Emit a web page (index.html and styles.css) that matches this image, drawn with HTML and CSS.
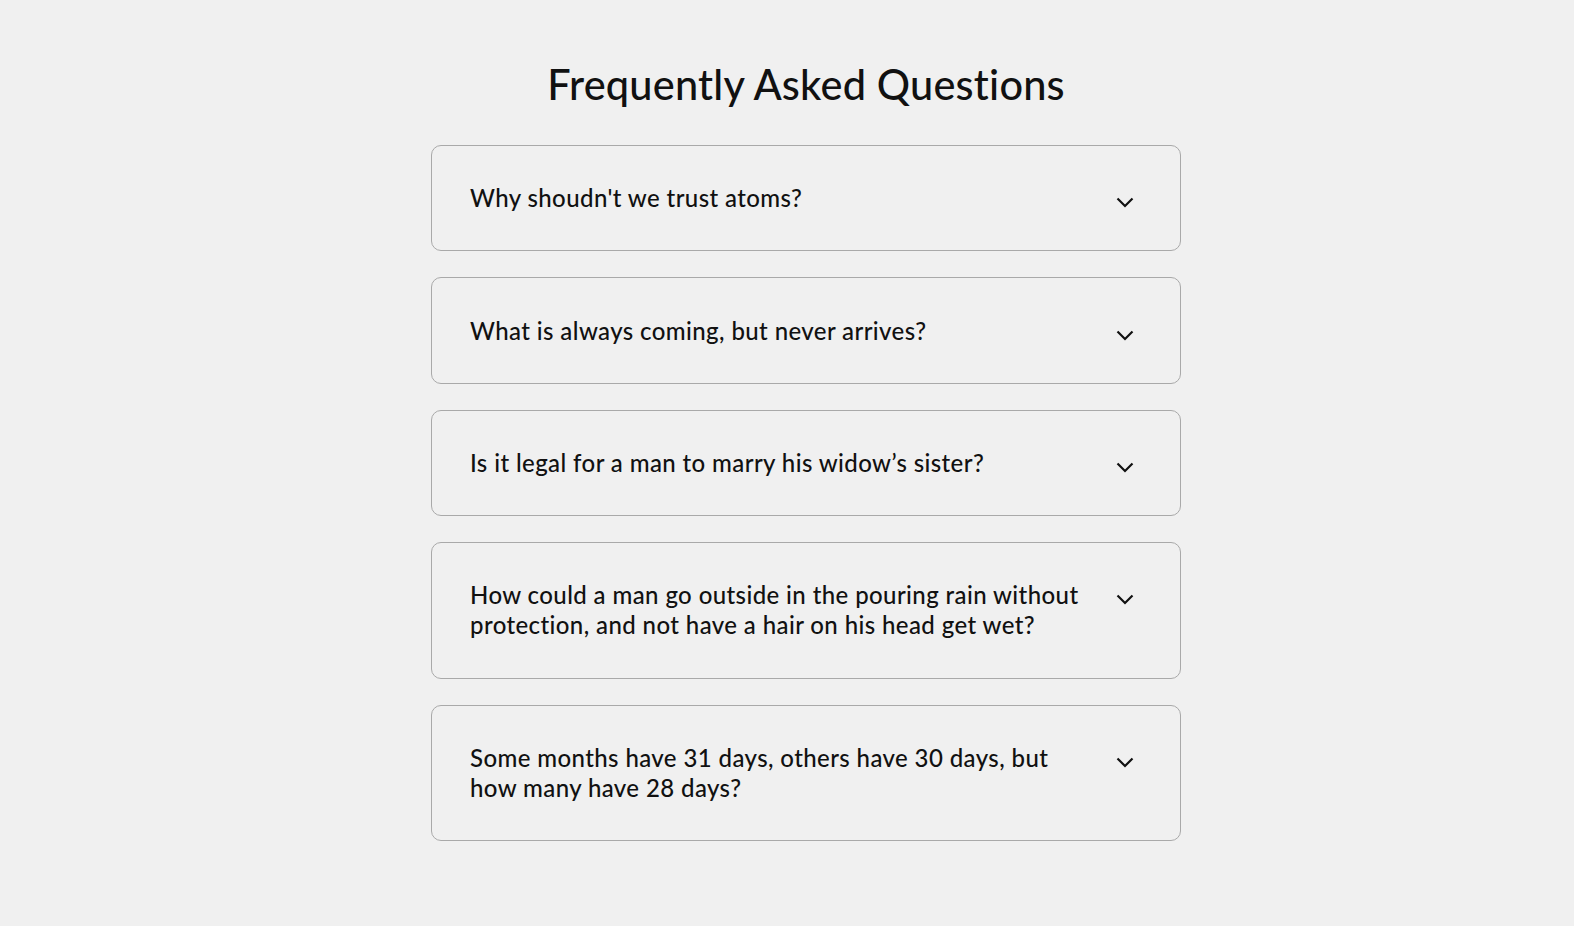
FILE: index.html
```html
<!DOCTYPE html>
<html lang="en">
<head>
<meta charset="utf-8">
<title>FAQ</title>
<link rel="stylesheet" href="styles.css">
</head>
<body>
<main class="page">
  <h1 class="title">Frequently Asked Questions</h1>
  <section class="faq">
    <div class="item">
      <p class="question">Why shoudn't we trust atoms?</p>
      <svg class="chev" viewBox="0 0 18 11" width="18" height="11"><path d="M1.5 1.5 L9 9 L16.5 1.5" fill="none" stroke="#111" stroke-width="2.2"/></svg>
    </div>
    <div class="item">
      <p class="question">What is always coming, but never arrives?</p>
      <svg class="chev" viewBox="0 0 18 11" width="18" height="11"><path d="M1.5 1.5 L9 9 L16.5 1.5" fill="none" stroke="#111" stroke-width="2.2"/></svg>
    </div>
    <div class="item">
      <p class="question">Is it legal for a man to marry his widow’s sister?</p>
      <svg class="chev" viewBox="0 0 18 11" width="18" height="11"><path d="M1.5 1.5 L9 9 L16.5 1.5" fill="none" stroke="#111" stroke-width="2.2"/></svg>
    </div>
    <div class="item">
      <p class="question">How could a man go outside in the pouring rain without protection, and not have a hair on his head get wet?</p>
      <svg class="chev" viewBox="0 0 18 11" width="18" height="11"><path d="M1.5 1.5 L9 9 L16.5 1.5" fill="none" stroke="#111" stroke-width="2.2"/></svg>
    </div>
    <div class="item">
      <p class="question">Some months have 31 days, others have 30 days, but how many have 28 days?</p>
      <svg class="chev" viewBox="0 0 18 11" width="18" height="11"><path d="M1.5 1.5 L9 9 L16.5 1.5" fill="none" stroke="#111" stroke-width="2.2"/></svg>
    </div>
  </section>
</main>
</body>
</html>
```

FILE: styles.css
```css
html, body {
  margin: 0;
  padding: 0;
}
body {
  background: #f0f0f0;
  font-family: "Lato", "Noto Sans", sans-serif;
  color: #111;
}
.page {
  display: flex;
  flex-direction: column;
  align-items: center;
  padding: 56px 0 0 38px;
}
.title {
  margin: 0;
  font-size: 41.5px;
  font-weight: 500;
  line-height: 56px;
  letter-spacing: 0.2px;
}
.faq {
  width: 750px;
  margin-top: 33px;
  display: flex;
  flex-direction: column;
  gap: 26px;
}
.item {
  box-sizing: border-box;
  border: 1px solid #a9a9a9;
  border-radius: 10px;
  padding: 37.2px 46px 37.2px 38px;
  display: flex;
  align-items: flex-start;
  justify-content: space-between;
  gap: 24px;
}
.question {
  margin: 0;
  font-size: 24px;
  line-height: 30px;
  font-weight: 500;
  letter-spacing: 0.4px;
  max-width: 620px;
}
.chev {
  flex: none;
  display: block;
  margin-top: 14px;
}
```
